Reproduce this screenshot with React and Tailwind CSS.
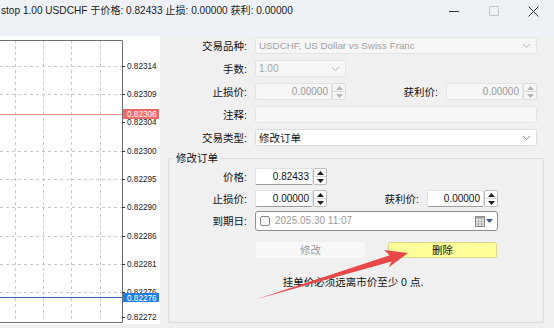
import React from 'react';

const labels = [
  { y: 30, t: '0.82314' },
  { y: 58, t: '0.82309' },
  { y: 86, t: '0.82304' },
  { y: 115, t: '0.82300' },
  { y: 143, t: '0.82295' },
  { y: 171, t: '0.82290' },
  { y: 200, t: '0.82286' },
  { y: 228, t: '0.82281' },
  { y: 256, t: '0.82276' },
  { y: 281, t: '0.82272' },
];
const gridY = [30, 58, 115, 143, 171, 200, 228, 256];
const gridX = [15, 43, 71, 100];

const Chart = () => (
  <div className="w-[160px] h-[288px] bg-white shrink-0">
    <svg width="160" height="288" className="block font-['Liberation_Sans',sans-serif]">
      {gridY.map((y) => (
        <line key={'h' + y} x1="0" x2="122" y1={y + 0.5} y2={y + 0.5} stroke="#c8c8c8" strokeDasharray="3 3" />
      ))}
      {gridX.map((x) => (
        <line key={'v' + x} x1={x + 0.5} x2={x + 0.5} y1="4" y2="286" stroke="#c8c8c8" strokeDasharray="3 3" />
      ))}
      <line x1="0" x2="122" y1="78.5" y2="78.5" stroke="#f08c8c" />
      <line x1="0" x2="122" y1="261.5" y2="261.5" stroke="#3a68b8" />
      <path d="M0 4.5 H122.5 V286.5 H0" fill="none" stroke="#6e6e6e" />
      {labels.map((l) => (
        <g key={l.t + l.y}>
          <line x1="122" x2="125" y1={l.y + 0.5} y2={l.y + 0.5} stroke="#333" />
          <text x="127" y={l.y + 3} fontSize="8.2" fill="#222">{l.t}</text>
        </g>
      ))}
      <rect x="123" y="73" width="36" height="10" fill="#f06a6a" />
      <text x="127" y="81" fontSize="8.2" fill="#fff">0.82306</text>
      <rect x="123" y="257" width="36" height="9" fill="#1f7fe8" />
      <text x="127" y="264.5" fontSize="8.2" fill="#fff">0.82276</text>
    </svg>
  </div>
);

const Chevron = ({ color = '#b8b8b8' }) => (
  <svg width="9" height="6" viewBox="0 0 9 6" className="shrink-0">
    <path d="M1 1 L4.5 4.5 L8 1" fill="none" stroke={color} strokeWidth="1" />
  </svg>
);

const Spinner = ({ disabled }) => (
  <div
    className={
      'w-[14px] h-full flex flex-col border rounded-[2px] shrink-0 ' +
      (disabled ? 'border-[#dcdcdc] bg-[#f6f6f6]' : 'border-[#bdbdbd] bg-white')
    }
  >
    <div className="flex-1 flex items-center justify-center border-b border-[#d6d6d6]">
      <svg width="7" height="4" viewBox="0 0 7 4">
        <path d="M0 4 L3.5 0 L7 4 Z" fill={disabled ? '#b5b5b5' : '#222'} />
      </svg>
    </div>
    <div className="flex-1 flex items-center justify-center">
      <svg width="7" height="4" viewBox="0 0 7 4">
        <path d="M0 0 L3.5 4 L7 0 Z" fill={disabled ? '#b5b5b5' : '#222'} />
      </svg>
    </div>
  </div>
);

const NumField = ({ value, w, disabled }) => (
  <div className="flex h-full" style={{ width: w }}>
    <div
      className={
        'flex-1 flex items-center justify-end pr-[3px] rounded-[2px] text-[10px] ' +
        (disabled ? 'bg-[#f6f6f6] border border-[#e4e4e4] text-[#9a9a9a]' : 'bg-white border border-[#e2e2e2] border-b-[#9a9a9a] text-[#111]')
      }
    >
      {value}
    </div>
    <Spinner disabled={disabled} />
  </div>
);

const Label = ({ children, w }) => (
  <div className="text-right text-[#111] shrink-0" style={{ width: w }}>
    {children}
  </div>
);

export default function App() {
  return (
    <div className="w-[554px] h-[328px] bg-[#f0f0f0] flex flex-col relative overflow-hidden text-[10.5px] leading-[14px] font-['Liberation_Sans','Noto_Sans_CJK_SC',sans-serif]">
      {/* title bar */}
      <div className="h-[36px] bg-[#eef2f7] shrink-0">
        <div className="h-[22px] flex items-center">
          <div className="pl-[1px] text-[10.1px] text-[#1a1a1a] whitespace-nowrap">
            stop 1.00 USDCHF 于价格: 0.82433 止损: 0.00000 获利: 0.00000
          </div>
          <div className="ml-auto flex items-center">
            <div className="w-[40px] flex justify-center">
              <div className="w-[10px] h-px bg-[#333]" />
            </div>
            <div className="w-[40px] flex justify-center">
              <div className="w-[10px] h-[10px] border border-[#c4c4c4] rounded-[1px]" />
            </div>
            <div className="w-[40px] flex justify-center pr-[1px]">
              <svg width="11" height="11" viewBox="0 0 11 11">
                <path d="M0.5 0.5 L10.5 10.5 M10.5 0.5 L0.5 10.5" stroke="#333" strokeWidth="1" />
              </svg>
            </div>
          </div>
        </div>
      </div>

      <div className="flex-1 flex">
        <Chart />
        <div className="flex-1 flex flex-col pt-[1px]">
          <div className="flex flex-col gap-[6px]">
            <div className="flex items-center h-[17px]">
              <Label w={87}>交易品种:</Label>
              <div className="ml-[8px] w-[282px] h-full flex items-center justify-between pl-[3px] pr-[5px] bg-[#f6f6f6] border border-[#e4e4e4] rounded-[2px] text-[#a3a3a3] text-[9.8px]">
                <span>USDCHF, US Dollar vs Swiss Franc</span>
                <Chevron />
              </div>
            </div>
            <div className="flex items-center h-[17px]">
              <Label w={87}>手数:</Label>
              <div className="ml-[8px] w-[91px] h-full flex items-center justify-between pl-[3px] pr-[5px] bg-[#f6f6f6] border border-[#e4e4e4] rounded-[2px] text-[#a3a3a3] text-[10px]">
                <span>1.00</span>
                <Chevron />
              </div>
            </div>
            <div className="flex items-center h-[17px]">
              <Label w={87}>止损价:</Label>
              <div className="ml-[8px] h-full">
                <NumField value="0.00000" w={91} disabled />
              </div>
              <Label w={92}>获利价:</Label>
              <div className="ml-[8px] h-full">
                <NumField value="0.00000" w={91} disabled />
              </div>
            </div>
            <div className="flex items-center h-[17px]">
              <Label w={87}>注释:</Label>
              <div className="ml-[8px] w-[282px] h-full bg-[#f6f6f6] border border-[#e4e4e4] rounded-[2px]" />
            </div>
            <div className="flex items-center h-[17px]">
              <Label w={87}>交易类型:</Label>
              <div className="ml-[8px] w-[282px] h-full flex items-center justify-between pl-[3px] pr-[5px] bg-white border border-[#dcdcdc] rounded-[2px] text-[#111]">
                <span>修改订单</span>
                <Chevron color="#888" />
              </div>
            </div>
          </div>

          {/* group box */}
          <div className="relative ml-[8px] mt-[12px] w-[376px] h-[165px] border border-[#dcdcdc] rounded-[2px] flex flex-col pt-[9px]">
            <div className="absolute left-[4px] top-[-8px] px-[3px] bg-[#f0f0f0] text-[#111]">修改订单</div>
            <div className="flex flex-col">
              <div className="flex items-center h-[17px]">
                <Label w={78}>价格:</Label>
                <div className="ml-[8px] h-full">
                  <NumField value="0.82433" w={72} />
                </div>
              </div>
              <div className="flex items-center h-[17px] mt-[5px]">
                <Label w={78}>止损价:</Label>
                <div className="ml-[8px] h-full">
                  <NumField value="0.00000" w={72} />
                </div>
                <Label w={92}>获利价:</Label>
                <div className="ml-[8px] h-full">
                  <NumField value="0.00000" w={71} />
                </div>
              </div>
              <div className="flex items-center h-[20px] mt-[4px]">
                <Label w={78}>到期日:</Label>
                <div className="ml-[8px] w-[243px] h-full flex items-center pl-[4px] pr-[4px] bg-white border border-[#8e8e8e] rounded-[3px]">
                  <div className="w-[10px] h-[10px] border border-[#8a8a8a] rounded-[2px] bg-[#f8f8f8]" />
                  <span className="ml-[5px] text-[#9a9a9a] text-[10px]">2025.05.30 11:07</span>
                  <div className="ml-auto flex items-center gap-[1px]">
                    <svg width="10" height="11" viewBox="0 0 10 11">
                      <rect x="0.5" y="0.5" width="9" height="10" fill="#e6e6e6" stroke="#8c8c8c" />
                      <rect x="0.5" y="0.5" width="9" height="2" fill="#9c9c9c" />
                      <path d="M3.5 3 V10 M6.5 3 V10 M1 5.5 H9 M1 8 H9" stroke="#b0b0b0" strokeWidth="0.8" />
                    </svg>
                    <svg width="7" height="4" viewBox="0 0 7 4">
                      <path d="M0 0 L3.5 4 L7 0 Z" fill="#3c5a9a" />
                    </svg>
                  </div>
                </div>
              </div>
              <div className="flex items-center h-[16px] mt-[11px]">
                <div className="ml-[87px] w-[109px] h-full flex items-center justify-center bg-[#f8f8f8] rounded-[2px] text-[#9a9a9a]">
                  修改
                </div>
                <div className="ml-[23px] w-[109px] h-full flex items-center justify-center bg-[#ffff9a] border border-[#dada8a] rounded-[2px] text-[#111]">
                  删除
                </div>
              </div>
              <div className="mt-[17px] flex justify-center text-[#111]">
                <span className="ml-[-6px]">挂单价必须远离市价至少 0 点.</span>
              </div>
            </div>
          </div>
        </div>
      </div>

      {/* annotation arrow */}
      <svg className="absolute left-0 top-0 pointer-events-none" width="554" height="328">
        <polygon
          points="257,299 391.5,261.5 388.5,267.5 408,253 384,250 389.8,255.2"
          fill="#e84848"
        />
      </svg>
    </div>
  );
}
